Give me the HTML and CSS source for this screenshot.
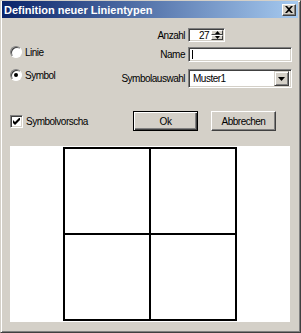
FILE: index.html
```html
<!DOCTYPE html>
<html lang="de">
<head>
    <meta charset="UTF-8">
    <title>Definition neuer Linientypen</title>
    <link rel="stylesheet" href="styles.css">
</head>
<body>
    <div class="window">
        <div class="titlebar">
            <span class="title">Definition neuer Linientypen</span>
            <span class="close">
                <svg width="8" height="7" viewBox="0 0 8 7"><path d="M0 0h2l2 2 2-2h2L5 3.5 8 7H6L4 5 2 7H0l3-3.5z" fill="#000"/></svg>
            </span>
        </div>
        <div class="client">
            <div class="form">
                <div class="label row1">Anzahl</div>
                <div class="spin row1">
                    <span class="spin-value">27</span>
                    <span class="spin-btns">
                        <span class="spin-btn"><svg width="5" height="3" viewBox="0 0 5 3"><path d="M2.5 0L5 3H0z" fill="#000"/></svg></span>
                        <span class="spin-btn"><svg width="5" height="3" viewBox="0 0 5 3"><path d="M0 0h5L2.5 3z" fill="#000"/></svg></span>
                    </span>
                </div>

                <div class="radio row2"><span class="radio-dot"></span>Linie</div>
                <div class="label row2">Name</div>
                <div class="field row2"><span class="caret"></span></div>

                <div class="radio checked row3"><span class="radio-dot"></span>Symbol</div>
                <div class="label row3">Symbolauswahl</div>
                <div class="combo row3">
                    <span class="combo-text">Muster1</span>
                    <span class="combo-btn"><svg width="7" height="4" viewBox="0 0 7 4"><path d="M0 0h7L3.5 4z" fill="#000"/></svg></span>
                </div>
            </div>

            <div class="actions">
                <div class="check">
                    <span class="check-box"><svg width="7" height="7" viewBox="0 0 7 7"><path d="M0 2v3l2 2 5-5V-1L2 4z" fill="#000"/></svg></span>
                    Symbolvorscha
                </div>
                <button class="btn default">Ok</button>
                <button class="btn">Abbrechen</button>
            </div>

            <div class="preview">
                <div class="square">
                    <div class="cell"></div>
                    <div class="cell"></div>
                    <div class="cell"></div>
                    <div class="cell"></div>
                </div>
            </div>
        </div>
    </div>
</body>
</html>
```

FILE: styles.css
```css
body {
    margin: 0;
    font-family: "Liberation Sans", Arial, sans-serif;
    font-size: 10px;
    letter-spacing: -0.5px;
    color: #000;
}
.window {
    width: 301px;
    height: 333px;
    box-sizing: border-box;
    background: #d4d0c8;
    border-top: 1px solid #d4d0c8;
    border-left: 1px solid #d4d0c8;
    border-right: 1px solid #404040;
    border-bottom: 1px solid #404040;
    box-shadow: inset 1px 1px #fff, inset -1px -1px #808080;
    padding: 0 2px 2px 1px;
    display: flex;
    flex-direction: column;
}
.titlebar {
    height: 17px;
    background: linear-gradient(90deg, #0a246a, #a6caf0);
    display: flex;
    align-items: center;
    justify-content: space-between;
    padding: 0 2px 0 2px;
}
.title {
    color: #fff;
    font-weight: bold;
    font-size: 11px;
    letter-spacing: 0;
}
.close {
    width: 14px;
    height: 12px;
    box-sizing: border-box;
    background: #d4d0c8;
    border: 1px solid;
    border-color: #fff #404040 #404040 #fff;
    box-shadow: inset -1px -1px #808080;
    display: flex;
    align-items: center;
    justify-content: center;
}
.client {
    padding: 10px 8px 0 8px;
    display: flex;
    flex-direction: column;
}

/* upper form */
.form {
    display: grid;
    grid-template-columns: 100px 72px 104px;
    grid-template-rows: 14px 20px 26px;
    column-gap: 3px;
    align-items: end;
}
.row1 { grid-row: 1; }
.row2 { grid-row: 2; }
.row3 { grid-row: 3; }
.label {
    grid-column: 2;
    text-align: right;
    align-self: center;
}
.row2.label { align-self: end; line-height: 15px; }
.row3.label { align-self: end; line-height: 19px; }
.spin, .field, .combo {
    grid-column: 3;
    box-sizing: border-box;
    background: #fff;
    border: 1px solid;
    border-color: #808080 #fff #fff #808080;
    box-shadow: inset 1px 1px #404040, inset -1px -1px #d4d0c8;
}
.spin {
    width: 37px;
    height: 14px;
    display: flex;
    padding: 1px;
}
.spin-value {
    flex: 1;
    text-align: right;
    line-height: 12px;
    padding-right: 2px;
}
.spin-btns {
    width: 12px;
    display: flex;
    flex-direction: column;
}
.spin-btn {
    flex: 1;
    box-sizing: border-box;
    background: #d4d0c8;
    border: 1px solid;
    border-color: #fff #404040 #404040 #fff;
    display: flex;
    align-items: center;
    justify-content: center;
}
.field {
    height: 15px;
    padding: 2px 3px;
}
.caret {
    display: block;
    width: 1px;
    height: 9px;
    background: #000;
}
.combo {
    height: 19px;
    display: flex;
    align-items: center;
    padding: 2px;
}
.combo-text {
    flex: 1;
    padding-left: 2px;
}
.combo-btn {
    width: 15px;
    height: 15px;
    box-sizing: border-box;
    background: #d4d0c8;
    border: 1px solid;
    border-color: #d4d0c8 #404040 #404040 #d4d0c8;
    box-shadow: inset 1px 1px #fff, inset -1px -1px #808080;
    display: flex;
    align-items: center;
    justify-content: center;
}
.radio {
    grid-column: 1;
    display: flex;
    align-items: center;
    gap: 3px;
    align-self: center;
}
.radio-dot {
    width: 12px;
    height: 12px;
    box-sizing: border-box;
    border-radius: 50%;
    background: #fff;
    border: 1px solid;
    border-color: #808080 #fff #fff #808080;
    box-shadow: inset 1px 1px #404040;
    display: flex;
    align-items: center;
    justify-content: center;
}
.checked .radio-dot::after {
    content: "";
    width: 4px;
    height: 4px;
    border-radius: 50%;
    background: #000;
}

/* checkbox and buttons */
.actions {
    margin-top: 23px;
    height: 20px;
    display: flex;
    align-items: center;
}
.check {
    width: 123px;
    display: flex;
    align-items: center;
    gap: 3px;
}
.check-box {
    width: 13px;
    height: 13px;
    box-sizing: border-box;
    background: #fff;
    border: 1px solid;
    border-color: #808080 #fff #fff #808080;
    box-shadow: inset 1px 1px #404040, inset -1px -1px #d4d0c8;
    display: flex;
    align-items: center;
    justify-content: center;
}
.btn {
    width: 65px;
    height: 20px;
    margin: 0 13px 0 0;
    padding: 0;
    font: inherit;
    letter-spacing: inherit;
    background: #d4d0c8;
    border: 1px solid;
    border-color: #fff #404040 #404040 #fff;
    box-shadow: inset -1px -1px #808080;
}
.btn.default {
    border-color: #000;
    box-shadow: inset 1px 1px #fff, inset -1px -1px #404040, inset -2px -2px #808080;
}

/* preview */
.preview {
    margin-top: 15px;
    width: 280px;
    height: 176px;
    background: #fff;
    display: flex;
    justify-content: center;
    align-items: center;
}
.square {
    width: 174px;
    height: 174px;
    box-sizing: border-box;
    background: #000;
    padding: 2px;
    display: grid;
    grid-template-columns: 1fr 1fr;
    grid-template-rows: 1fr 1fr;
    gap: 2px;
}
.cell {
    background: #fff;
}
```
